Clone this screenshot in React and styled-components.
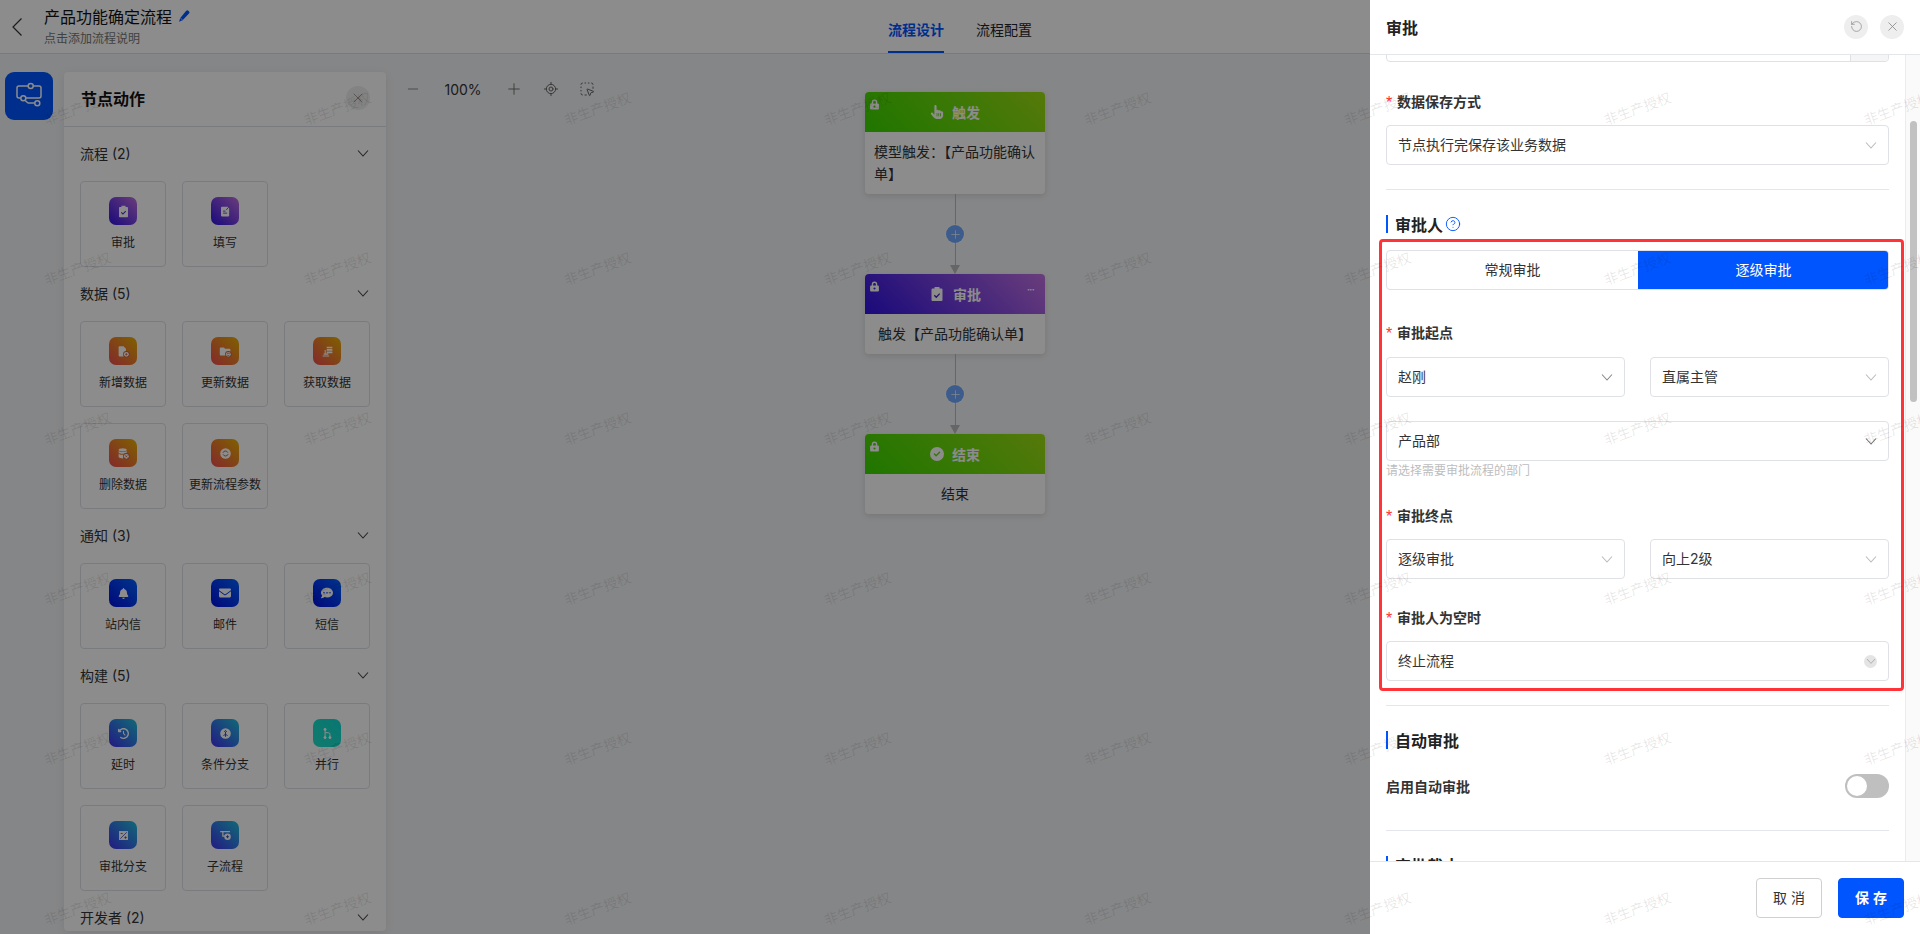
import React from 'react';
import styled, { createGlobalStyle } from 'styled-components';
import { CircleHelp, LocateFixed, Minus, Plus, RotateCcw, SquareDashedMousePointer, X } from 'lucide-react';
import { FaBell, FaCircleCheck, FaClockRotateLeft, FaCommentDots, FaEnvelope, FaHandPointer } from 'react-icons/fa6';

const GlobalStyle = createGlobalStyle`
  html, body { margin: 0; padding: 0; }
  body {
    font-family: Inter, "Noto Sans CJK SC", "Liberation Sans", sans-serif;
    color: #1f2329;
    background: #f3f4f6;
  }
  * { box-sizing: border-box; }
`;

const gradients = {
  purple: 'linear-gradient(45deg, #2f12e0, #c070e0)',
  orange: 'linear-gradient(45deg, #f04a50, #e8b000)',
  navy: 'linear-gradient(45deg, #0010e0, #0060ff)',
  ocean: 'linear-gradient(45deg, #4030f0, #20c0d8)',
  teal: 'linear-gradient(45deg, #1fe0c8, #10d8d0)',
  green: 'linear-gradient(45deg, #38d800, #9cdc14)',
};

const Page = styled.div`
  position: relative;
  width: 1920px;
  height: 934px;
  overflow: hidden;
`;

const TopBar = styled.header`
  position: relative;
  display: flex;
  align-items: center;
  height: 54px;
  background: #fff;
  border-bottom: 1px solid #dcdfe6;
`;

const BackButton = styled.span`
  display: flex;
  margin: 0 0 0 11px;
  color: #333;
`;

const TitleBlock = styled.div`
  margin-left: 21px;
`;

const FlowTitle = styled.div`
  display: flex;
  align-items: center;
  gap: 6px;
  font-size: 16px;
  line-height: 22px;
  color: #111;
`;

const FlowHint = styled.div`
  margin-top: 2px;
  font-size: 12px;
  line-height: 18px;
  color: #777;
`;

const Tabs = styled.nav`
  position: absolute;
  left: 888px;
  top: 0;
  display: flex;
  gap: 32px;
  height: 54px;
`;

const Tab = styled.span`
  font-size: 14px;
  line-height: 60px;
  height: 53px;
  font-weight: ${(p) => (p.$active ? 700 : 400)};
  color: ${(p) => (p.$active ? '#0055ff' : '#1f2329')};
  border-bottom: 2px solid ${(p) => (p.$active ? '#0055ff' : 'transparent')};
`;

const Workspace = styled.main`
  display: flex;
  align-items: flex-start;
  padding: 18px 0 0 5px;
  height: 880px;
`;

const RailButton = styled.span`
  flex: none;
  display: flex;
  align-items: center;
  justify-content: center;
  width: 48px;
  height: 48px;
  border-radius: 9px;
  background: #0055ff;
  color: #fff;
`;

const NodePanel = styled.aside`
  flex: none;
  width: 322px;
  height: 859px;
  margin-left: 11px;
  background: #fff;
  border-radius: 4px;
  overflow: hidden;
  box-shadow: 0 2px 10px rgba(0, 0, 0, 0.08);
`;

const PanelHead = styled.div`
  display: flex;
  align-items: center;
  justify-content: space-between;
  height: 55px;
  padding: 0 16px 2px 17px;
  border-bottom: 1px solid #dfe1e6;
  font-size: 16px;
  font-weight: 700;
  color: #111;
`;

const RoundButton = styled.span`
  display: flex;
  align-items: center;
  justify-content: center;
  width: 24px;
  height: 24px;
  border-radius: 50%;
  background: #eeeeee;
  color: #888;
`;

const PanelBody = styled.div`
  padding: 0 16px;
`;

const GroupHead = styled.div`
  display: flex;
  align-items: center;
  justify-content: space-between;
  height: 54px;
  padding-bottom: 2px;
  font-size: 14px;
  color: #333;
`;

const TileGrid = styled.div`
  display: grid;
  grid-template-columns: repeat(3, 86px);
  gap: 16px;
`;

const Tile = styled.div`
  display: flex;
  flex-direction: column;
  align-items: center;
  height: 86px;
  padding-top: 15px;
  border: 1px solid #dfe1e6;
  border-radius: 4px;
  font-size: 12px;
  line-height: 18px;
  color: #333;
`;

const TileIcon = styled.span`
  display: flex;
  align-items: center;
  justify-content: center;
  width: 28px;
  height: 28px;
  margin-bottom: 9px;
  border-radius: 7px;
  background: ${(p) => gradients[p.$tone]};
  color: #fff;
`;

const ZoomBar = styled.div`
  flex: none;
  display: flex;
  align-items: center;
  gap: 20px;
  height: 34px;
  margin-left: 19px;
  color: #666;
`;

const ZoomValue = styled.span`
  width: 44px;
  text-align: center;
  font-size: 14px;
  color: #333;
`;

const FlowColumn = styled.div`
  flex: none;
  display: flex;
  flex-direction: column;
  align-items: center;
  width: 180px;
  margin: 20px 0 0 270px;
`;

const FlowNode = styled.div`
  width: 180px;
  border-radius: 4px;
  overflow: hidden;
  background: #fff;
  box-shadow: 0 2px 6px rgba(0, 0, 0, 0.12);
`;

const NodeHead = styled.div`
  position: relative;
  display: flex;
  align-items: center;
  justify-content: center;
  gap: 8px;
  height: 40px;
  background: ${(p) => gradients[p.$tone]};
  color: #fff;
  font-size: 14px;
  font-weight: 700;
`;

const NodeLock = styled.span`
  position: absolute;
  left: 4px;
  top: 7px;
  display: flex;
`;

const NodeMore = styled.span`
  position: absolute;
  right: 11px;
  top: 8px;
  font-size: 12px;
  line-height: 16px;
  font-weight: 400;
  letter-spacing: -1px;
`;

const NodeBody = styled.div`
  padding: ${(p) => (p.$multi ? '9px 6px 9px 9px' : '9px 6px')};
  font-size: 14px;
  line-height: 22px;
  color: #333;
  text-align: ${(p) => (p.$multi ? 'left' : 'center')};
`;

const Connector = styled.div`
  display: flex;
  flex-direction: column;
  align-items: center;
  height: 80px;
`;

const ConnectorLine = styled.span`
  flex: ${(p) => (p.$fill ? 1 : 'none')};
  height: ${(p) => (p.$fill ? 'auto' : '31px')};
  width: 1px;
  background: #bbb;
`;

const AddButton = styled.span`
  flex: none;
  display: flex;
  align-items: center;
  justify-content: center;
  width: 18px;
  height: 18px;
  border-radius: 50%;
  background: #6fa8ff;
  color: #fff;
  box-shadow: 0 0 0 1px rgba(255, 255, 255, 0.5);
`;

const ArrowHead = styled.span`
  flex: none;
  width: 0;
  height: 0;
  border-left: 5px solid transparent;
  border-right: 5px solid transparent;
  border-top: 9px solid #bbb;
`;

const Mask = styled.div`
  position: absolute;
  inset: 0;
  background: rgba(0, 0, 0, 0.45);
`;

const Drawer = styled.section`
  position: absolute;
  top: 0;
  right: 0;
  bottom: 0;
  width: 550px;
  display: flex;
  flex-direction: column;
  background: #fff;
`;

const DrawerHead = styled.div`
  flex: none;
  display: flex;
  align-items: center;
  justify-content: space-between;
  height: 55px;
  padding: 0 16px 1px;
  border-bottom: 1px solid #e4e6eb;
  font-size: 16px;
  font-weight: 700;
  color: #222;
`;

const HeadActions = styled.div`
  display: flex;
  gap: 12px;
`;

const DrawerMiddle = styled.div`
  flex: 1;
  display: flex;
  min-height: 0;
`;

const DrawerScroll = styled.div`
  flex: 1;
  min-width: 0;
  padding: 0 16px;
  overflow: hidden;
`;

const Track = styled.div`
  flex: none;
  width: 15px;
  padding: 66px 3px 0 4px;
  background: #fafafa;
  border-left: 1px solid #ececec;
`;

const Thumb = styled.div`
  height: 281px;
  border-radius: 4px;
  background: #c1c1c1;
`;

const ClippedInput = styled.div`
  display: flex;
  justify-content: flex-end;
  height: 40px;
  margin-top: -33px;
  border: 1px solid #dfe1e6;
  border-radius: 4px;
  overflow: hidden;
`;

const InputAddon = styled.span`
  width: 38px;
  background: #f5f5f5;
  border-left: 1px solid #dfe1e6;
`;

const FieldLabel = styled.div`
  display: flex;
  align-items: center;
  height: 22px;
  margin: ${(p) => p.$top}px 0 ${(p) => p.$bottom ?? 12}px;
  padding-bottom: 2px;
  font-size: 14px;
  font-weight: 700;
  color: #333;

  &::before {
    content: '*';
    width: 11px;
    margin-top: 3px;
    color: #ff3333;
    font-size: 16px;
    font-weight: 400;
    font-family: "Liberation Sans", sans-serif;
  }
`;

const SelectBox = styled.div`
  display: flex;
  align-items: center;
  justify-content: space-between;
  height: 40px;
  margin-top: ${(p) => p.$top || 0}px;
  padding: 0 10px 2px 11px;
  background: #fff;
  border: 1px solid #dfe1e6;
  border-radius: 4px;
  font-size: 14px;
  color: #333;

  svg {
    margin-top: 2px;
  }
`;

const SelectPair = styled.div`
  display: grid;
  grid-template-columns: 239px 1fr;
  gap: 25px;
`;

const ClearBadge = styled.span`
  display: flex;
  align-items: center;
  justify-content: center;
  width: 13px;
  height: 13px;
  margin: 2px 1px 0 0;
  border-radius: 50%;
  background: #e4e4e4;

  svg {
    flex: none;
    margin: 0;
  }
`;

const Divider = styled.div`
  height: 1px;
  margin-top: ${(p) => p.$top}px;
  background: #e4e6eb;
`;

const SectionTitle = styled.div`
  display: flex;
  align-items: center;
  gap: 2px;
  height: 18px;
  margin-top: 25px;
  padding-left: 7px;
  border-left: 2px solid #0055ff;
  font-size: 16px;
  font-weight: 700;
  color: #222;
`;

const Annotated = styled.div`
  margin: 6px -15px 0 -7px;
  padding: 8px 12px 7px 4px;
  border: 3px solid #ff3338;
  border-radius: 4px;
`;

const Segmented = styled.div`
  display: grid;
  grid-template-columns: 251px 1fr;
  height: 40px;
  margin-bottom: 32px;
  border: 1px solid #dfe1e6;
  border-radius: 4px;
  overflow: hidden;
`;

const Segment = styled.span`
  display: flex;
  align-items: center;
  justify-content: center;
  margin: ${(p) => (p.$active ? '-1px -1px -1px 0' : 0)};
  padding-bottom: 2px;
  font-size: 14px;
  color: ${(p) => (p.$active ? '#fff' : '#333')};
  background: ${(p) => (p.$active ? '#0055ff' : 'transparent')};
`;

const FieldHint = styled.div`
  font-size: 12px;
  line-height: 20px;
  color: #bdbdbd;
`;

const SwitchRow = styled.div`
  display: flex;
  align-items: center;
  justify-content: space-between;
  margin-top: 25px;
  font-size: 14px;
  font-weight: 700;
  color: #333;
`;

const Switch = styled.span`
  display: flex;
  align-items: center;
  width: 44px;
  height: 24px;
  padding: 2px;
  border-radius: 12px;
  background: #bfbfbf;

  &::before {
    content: '';
    width: 20px;
    height: 20px;
    border-radius: 50%;
    background: #fff;
  }
`;

const DrawerFoot = styled.div`
  flex: none;
  display: flex;
  align-items: center;
  justify-content: flex-end;
  gap: 16px;
  height: 73px;
  padding-right: 16px;
  border-top: 1px solid #e4e6eb;
`;

const FootButton = styled.span`
  display: flex;
  align-items: center;
  justify-content: center;
  width: 66px;
  height: 40px;
  border-radius: 4px;
  font-size: 14px;
  font-weight: ${(p) => (p.$primary ? 700 : 400)};
  letter-spacing: 4px;
  padding: 0 0 2px 4px;
  border: 1px solid ${(p) => (p.$primary ? '#0055ff' : '#d0d0d0')};
  background: ${(p) => (p.$primary ? '#0055ff' : '#fff')};
  color: ${(p) => (p.$primary ? '#fff' : '#333')};
`;

const Watermarks = styled.div`
  position: absolute;
  left: -53px;
  top: 28px;
  display: grid;
  grid-template-columns: repeat(8, 260px);
  grid-auto-rows: 160px;
  pointer-events: none;
`;

const Watermark = styled.span`
  display: flex;
  align-items: center;
  justify-content: center;
  font-size: 14px;
  color: rgba(0, 0, 0, 0.1);
  transform: rotate(-20deg);
`;

const Chevron = ({ color = '#bbb', size = 10 }) => (
  <svg width={size + 4} height={size} viewBox="0 0 14 10" fill="none" stroke={color} strokeWidth="1.1">
    <path d="M2 2.5l5 5.5 5-5.5" />
  </svg>
);

const BackGlyph = () => (
  <svg width="12" height="20" viewBox="0 0 12 20" fill="none" stroke="currentColor" strokeWidth="1.2">
    <path d="M10.500 1.500L2 10l8.500 8.500" />
  </svg>
);

const LockGlyph = () => (
  <svg width="11" height="11" viewBox="0 0 12 12" fill="#fff">
    <path d="M3 5V3.6a3 3 0 0 1 6 0V5h.8a1 1 0 0 1 1 1v4.4a1 1 0 0 1-1 1H2.200a1 1 0 0 1-1-1V6a1 1 0 0 1 1-1zm1.500 0h3V3.600a1.500 1.500 0 0 0-3 0zM6 7a1.200 1.200 0 1 0 0 2.400A1.200 1.200 0 0 0 6 7z" fillRule="evenodd" />
  </svg>
);

const PenGlyph = () => (
  <svg width="12" height="13" viewBox="0 0 12 13" fill="#0055ff">
    <path d="M8.200.8a1.500 1.500 0 0 1 2.200 0l.6.700a1.500 1.500 0 0 1 0 2.100L4.600 10.200 1 11.800l1.300-3.900z" />
    <path d="M2.800 8.300l1.400 1.500" stroke="#fff" strokeWidth=".8" />
  </svg>
);

const FlowGlyph = () => (
  <svg width="48" height="48" viewBox="0 0 48 48" fill="none" stroke="currentColor" strokeWidth="1.500">
    <circle cx="25.700" cy="14" r="2.500" />
    <circle cx="18.300" cy="26.300" r="2.500" />
    <circle cx="32.300" cy="31.300" r="2.500" />
    <path d="M23.200 14H14a2 2 0 0 0-2 2v8a2 2 0 0 0 2 2h1.800" />
    <path d="M28.200 14H34a2 2 0 0 1 2 2v8a2 2 0 0 1-2 2H20.800" />
    <path d="M20 28.200l2.400 2.300a1.500 1.500 0 0 0 1 .4h6.400" />
  </svg>
);

const ClipboardGlyph = ({ size = 13, check = '#4a22c0' }) => (
  <svg width={size} height={size} viewBox="0 0 16 16" fill="currentColor">
    <path d="M5.500 1h5v1.500h2a1 1 0 0 1 1 1V14a1 1 0 0 1-1 1h-9a1 1 0 0 1-1-1V3.500a1 1 0 0 1 1-1h2z" />
    <path d="M5.300 9.200l2 2 3.400-3.600" fill="none" stroke={check} strokeWidth="1.300" />
  </svg>
);

const glyph = (children) => (
  <svg width="13" height="13" viewBox="0 0 16 16" fill="currentColor">
    {children}
  </svg>
);

const badge = (cut, mark) => (
  <>
    <circle cx="11.500" cy="11.500" r="4" fill={cut} />
    <circle cx="11.500" cy="11.500" r="3" />
    <path d={mark} fill="none" stroke={cut} strokeWidth="1" />
  </>
);

const tileIcons = {
  approve: <ClipboardGlyph />,
  fill: glyph(
    <>
      <path d="M3.500 2h7l2 2v9a1 1 0 0 1-1 1h-8a1 1 0 0 1-1-1V3a1 1 0 0 1 1-1z" />
      <path d="M5 7.500h3M5 10h5M9 6l2.500-3" stroke="#4a22c0" strokeWidth="1" fill="none" />
    </>
  ),
  add: glyph(
    <>
      <path d="M3 1.500h5l3 3V7l-3 7H3a1 1 0 0 1-1-1V2.500a1 1 0 0 1 1-1z" />
      {badge('#d06030', 'M11.500 10v3M10 11.500h3')}
    </>
  ),
  update: glyph(
    <>
      <path d="M2 3h4l1.500 1.500H13a1 1 0 0 1 1 1V8l-5 5H2a1 1 0 0 1-1-1V4a1 1 0 0 1 1-1z" />
      {badge('#d06030', 'M10 11a1.600 1.600 0 0 1 3 0M13 12a1.600 1.600 0 0 1-3 0')}
    </>
  ),
  fetch: glyph(
    <path d="M7 2h7v2H7zm0 3h7v2H7zm0 3h7v2H7zM4.500 6h1.300v4.500H9V12H3.200v-1.500h1.300zM2 13h8v1.200H2z" />
  ),
  remove: glyph(
    <>
      <ellipse cx="7" cy="3.500" rx="5" ry="2" />
      <path d="M2 5c1.500 1.600 8.500 1.600 10 0v2c-1.500 1.600-8.500 1.600-10 0zm0 3.200c1.500 1.600 6 1.600 7 1.300L7.500 14C5 14 2 13.300 2 12z" />
      {badge('#d06030', 'M10.300 10.300l2.400 2.400M12.700 10.300l-2.400 2.400')}
    </>
  ),
  params: glyph(
    <>
      <path d="M8 1.500a6.500 6.500 0 1 1 0 13 6.500 6.500 0 0 1 0-13z" />
      <path d="M4.800 7.200A3.300 3.300 0 0 1 11 7M11.200 8.800A3.300 3.300 0 0 1 5 9" fill="none" stroke="#d06030" strokeWidth="1.200" />
    </>
  ),
  bell: <FaBell size={11} />,
  mail: <FaEnvelope size={12} />,
  sms: <FaCommentDots size={12} />,
  delay: <FaClockRotateLeft size={11} />,
  condition: glyph(
    <>
      <circle cx="8" cy="8" r="6.500" />
      <path d="M8 12V6M8 8.500L5.500 11M8 8.500l2.500 2.500M6.500 6L8 4.200 9.500 6" fill="none" stroke="#3350b0" strokeWidth="1.200" />
    </>
  ),
  parallel: (
    <svg width="13" height="13" viewBox="0 0 16 16" fill="none" stroke="currentColor" strokeWidth="1.200">
      <circle cx="5" cy="3" r="1.300" fill="currentColor" />
      <circle cx="5" cy="13" r="1.300" fill="currentColor" />
      <circle cx="11" cy="13" r="1.300" fill="currentColor" />
      <path d="M5 4v8M5 7h4a2 2 0 0 1 2 2v3" />
    </svg>
  ),
  branch: glyph(
    <>
      <rect x="2.500" y="2.500" width="11" height="11" />
      <path d="M4 12l8-8M4.500 5.500h2.500M9 10.500h3M10.500 9v3" stroke="#3350b0" strokeWidth="1" fill="none" />
    </>
  ),
  subflow: glyph(
    <>
      <path d="M1.500 2.500h12v1.500h-12zM4 4h1.500v4H8v1.500H4z" />
      <circle cx="10.500" cy="9.500" r="4" />
      <path d="M10.500 7.700v3.600M8.700 9.500h3.600" stroke="#3350b0" strokeWidth="1.200" />
    </>
  ),
};

const groups = [
  { name: '流程', tiles: [['审批', 'approve', 'purple'], ['填写', 'fill', 'purple']] },
  {
    name: '数据',
    tiles: [
      ['新增数据', 'add', 'orange'],
      ['更新数据', 'update', 'orange'],
      ['获取数据', 'fetch', 'orange'],
      ['删除数据', 'remove', 'orange'],
      ['更新流程参数', 'params', 'orange'],
    ],
  },
  { name: '通知', tiles: [['站内信', 'bell', 'navy'], ['邮件', 'mail', 'navy'], ['短信', 'sms', 'navy']] },
  {
    name: '构建',
    tiles: [
      ['延时', 'delay', 'ocean'],
      ['条件分支', 'condition', 'ocean'],
      ['并行', 'parallel', 'teal'],
      ['审批分支', 'branch', 'ocean'],
      ['子流程', 'subflow', 'ocean'],
    ],
  },
  { name: '开发者', count: 2, tiles: [] },
];

const LinkBetween = () => (
  <Connector>
    <ConnectorLine />
    <AddButton>
      <Plus size={13} strokeWidth={1.2} />
    </AddButton>
    <ConnectorLine $fill />
    <ArrowHead />
  </Connector>
);

const Select = ({ children, top, chevron }) => (
  <SelectBox $top={top}>
    {children}
    <Chevron color={chevron} />
  </SelectBox>
);

const App = () => (
  <Page>
    <GlobalStyle />
    <TopBar>
      <BackButton>
        <BackGlyph />
      </BackButton>
      <TitleBlock>
        <FlowTitle>
          产品功能确定流程
          <PenGlyph />
        </FlowTitle>
        <FlowHint>点击添加流程说明</FlowHint>
      </TitleBlock>
      <Tabs>
        <Tab $active>流程设计</Tab>
        <Tab>流程配置</Tab>
      </Tabs>
    </TopBar>

    <Workspace>
      <RailButton>
        <FlowGlyph />
      </RailButton>
      <NodePanel>
        <PanelHead>
          节点动作
          <RoundButton>
            <X size={16} strokeWidth={1.2} />
          </RoundButton>
        </PanelHead>
        <PanelBody>
          {groups.map((group) => (
            <div key={group.name}>
              <GroupHead>
                {group.name} ({group.count ?? group.tiles.length})
                <Chevron color="#444" />
              </GroupHead>
              <TileGrid>
                {group.tiles.map(([label, icon, tone]) => (
                  <Tile key={label}>
                    <TileIcon $tone={tone}>{tileIcons[icon]}</TileIcon>
                    {label}
                  </Tile>
                ))}
              </TileGrid>
            </div>
          ))}
        </PanelBody>
      </NodePanel>

      <ZoomBar>
        <Minus size={16} strokeWidth={1.1} />
        <ZoomValue>100%</ZoomValue>
        <Plus size={18} strokeWidth={1.2} />
        <LocateFixed size={16} strokeWidth={1.5} />
        <SquareDashedMousePointer size={16} strokeWidth={1.5} />
      </ZoomBar>

      <FlowColumn>
        <FlowNode>
          <NodeHead $tone="green">
            <NodeLock><LockGlyph /></NodeLock>
            <FaHandPointer size={14} />
            触发
          </NodeHead>
          <NodeBody $multi>模型触发：【产品功能确认单】</NodeBody>
        </FlowNode>
        <LinkBetween />
        <FlowNode>
          <NodeHead $tone="purple">
            <NodeLock><LockGlyph /></NodeLock>
            <ClipboardGlyph size={16} />
            审批
            <NodeMore>···</NodeMore>
          </NodeHead>
          <NodeBody>触发【产品功能确认单】</NodeBody>
        </FlowNode>
        <LinkBetween />
        <FlowNode>
          <NodeHead $tone="green">
            <NodeLock><LockGlyph /></NodeLock>
            <FaCircleCheck size={14} />
            结束
          </NodeHead>
          <NodeBody>结束</NodeBody>
        </FlowNode>
      </FlowColumn>
    </Workspace>

    <Mask />

    <Drawer>
      <DrawerHead>
        审批
        <HeadActions>
          <RoundButton>
            <RotateCcw size={13} strokeWidth={1.3} />
          </RoundButton>
          <RoundButton>
            <X size={15} strokeWidth={1.3} />
          </RoundButton>
        </HeadActions>
      </DrawerHead>
      <DrawerMiddle>
        <DrawerScroll>
          <ClippedInput>
            <InputAddon />
          </ClippedInput>
          <FieldLabel $top={29}>数据保存方式</FieldLabel>
          <Select>节点执行完保存该业务数据</Select>
          <Divider $top={24} />
          <SectionTitle>
            审批人
            <CircleHelp size={16} strokeWidth={1.4} color="#0055ff" />
          </SectionTitle>
          <Annotated>
            <Segmented>
              <Segment>常规审批</Segment>
              <Segment $active>逐级审批</Segment>
            </Segmented>
            <FieldLabel $top={0} $bottom={13}>审批起点</FieldLabel>
            <SelectPair>
              <Select chevron="#888">赵刚</Select>
              <Select>直属主管</Select>
            </SelectPair>
            <Select top={24} chevron="#777">产品部</Select>
            <FieldHint>请选择需要审批流程的部门</FieldHint>
            <FieldLabel $top={24}>审批终点</FieldLabel>
            <SelectPair>
              <Select>逐级审批</Select>
              <Select>向上2级</Select>
            </SelectPair>
            <FieldLabel $top={28}>审批人为空时</FieldLabel>
            <SelectBox>
              终止流程
              <ClearBadge>
                <Chevron color="#aaa" size={8} />
              </ClearBadge>
            </SelectBox>
          </Annotated>
          <Divider $top={14} />
          <SectionTitle>自动审批</SectionTitle>
          <SwitchRow>
            启用自动审批
            <Switch />
          </SwitchRow>
          <Divider $top={32} />
          <SectionTitle>审批截止</SectionTitle>
        </DrawerScroll>
        <Track>
          <Thumb />
        </Track>
      </DrawerMiddle>
      <DrawerFoot>
        <FootButton>取消</FootButton>
        <FootButton $primary>保存</FootButton>
      </DrawerFoot>
    </Drawer>

    <Watermarks>
      {Array.from({ length: 48 }, (_, i) => (
        <Watermark key={i}>非生产授权</Watermark>
      ))}
    </Watermarks>
  </Page>
);

export default App;
